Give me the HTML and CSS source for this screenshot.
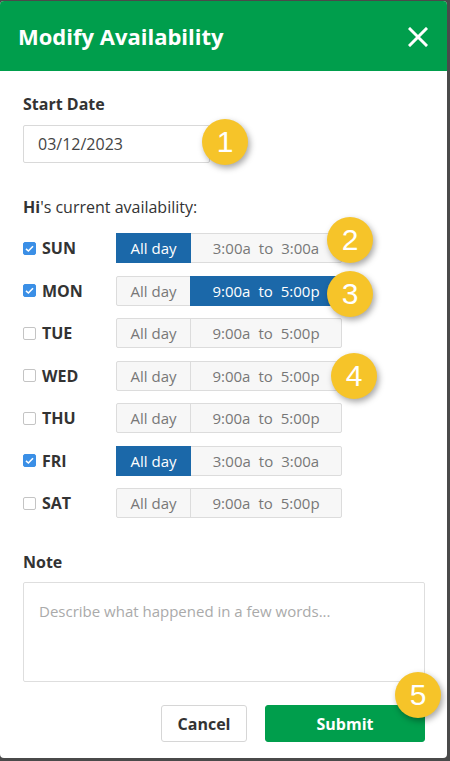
FILE: index.html
```html
<!DOCTYPE html>
<html>
<head>
<meta charset="utf-8">
<link rel="stylesheet" href="styles.css">
</head>
<body>
<div class="modal">
  <div class="modal-header">
    <h1 class="title">Modify Availability</h1>
    <svg class="close" width="20" height="20" viewBox="0 0 20 20"><path d="M2 2 L18 18 M18 2 L2 18" stroke="#fff" stroke-width="3" stroke-linecap="square"/></svg>
  </div>
  <div class="modal-body">
    <div class="label">Start Date</div>
    <div class="date-input">03/12/2023</div>
    <div class="current"><b>Hi</b>'s current availability:</div>
    <div class="days">
      <div class="day-row">
        <div class="day"><span class="cb on"><svg viewBox="0 0 13 13" width="13" height="13"><path d="M3 6.8 L5.4 9 L10 4.3" fill="none" stroke="#fff" stroke-width="1.6"/></svg></span><span class="day-name">SUN</span></div>
        <div class="seg"><span class="allday sel">All day</span><span class="time">3:00a<i>to</i>3:00a</span></div>
      </div>
      <div class="day-row">
        <div class="day"><span class="cb on"><svg viewBox="0 0 13 13" width="13" height="13"><path d="M3 6.8 L5.4 9 L10 4.3" fill="none" stroke="#fff" stroke-width="1.6"/></svg></span><span class="day-name">MON</span></div>
        <div class="seg"><span class="allday">All day</span><span class="time sel">9:00a<i>to</i>5:00p</span></div>
      </div>
      <div class="day-row">
        <div class="day"><span class="cb"></span><span class="day-name">TUE</span></div>
        <div class="seg"><span class="allday">All day</span><span class="time">9:00a<i>to</i>5:00p</span></div>
      </div>
      <div class="day-row">
        <div class="day"><span class="cb"></span><span class="day-name">WED</span></div>
        <div class="seg"><span class="allday">All day</span><span class="time">9:00a<i>to</i>5:00p</span></div>
      </div>
      <div class="day-row">
        <div class="day"><span class="cb"></span><span class="day-name">THU</span></div>
        <div class="seg"><span class="allday">All day</span><span class="time">9:00a<i>to</i>5:00p</span></div>
      </div>
      <div class="day-row">
        <div class="day"><span class="cb on"><svg viewBox="0 0 13 13" width="13" height="13"><path d="M3 6.8 L5.4 9 L10 4.3" fill="none" stroke="#fff" stroke-width="1.6"/></svg></span><span class="day-name">FRI</span></div>
        <div class="seg"><span class="allday sel">All day</span><span class="time">3:00a<i>to</i>3:00a</span></div>
      </div>
      <div class="day-row">
        <div class="day"><span class="cb"></span><span class="day-name">SAT</span></div>
        <div class="seg"><span class="allday">All day</span><span class="time">9:00a<i>to</i>5:00p</span></div>
      </div>
    </div>
    <div class="label note-label">Note</div>
    <div class="note">Describe what happened in a few words...</div>
    <div class="actions">
      <button class="btn cancel">Cancel</button>
      <button class="btn submit">Submit</button>
    </div>
  </div>
  <span class="badge b1">1</span>
  <span class="badge b2">2</span>
  <span class="badge b3">3</span>
  <span class="badge b4">4</span>
  <span class="badge b5">5</span>
</div>
</body>
</html>
```
FILE: styles.css
```css
html, body {
  margin: 0;
  padding: 0;
  background: #4a4a4a;
  height: 761px;
  overflow: hidden;
}
.modal {
  position: relative;
  box-sizing: border-box;
  width: 447px;
  height: 757px;
  margin: 1px 0 0 0;
  background: #fff;
  border-radius: 4px;
  overflow: hidden;
  font-family: "Open Sans", "Liberation Sans", sans-serif;
  color: #333;
}
.modal-header {
  height: 70px;
  background: #009e4c;
  display: flex;
  align-items: center;
  justify-content: space-between;
  padding: 0 18px 0 18px;
}
.title {
  margin: 0;
  color: #fff;
  font-size: 22px;
  font-weight: 700;
  letter-spacing: 0;
}
.close {
  margin-right: 1px;
  margin-top: 2px;
}
.modal-body {
  padding: 23px 22px 0 23px;
}
.label {
  font-size: 16px;
  font-weight: 700;
  line-height: 20px;
  color: #333;
}
.date-input {
  margin-top: 11px;
  box-sizing: border-box;
  width: 187px;
  height: 38px;
  border: 1px solid #d9d9d9;
  border-radius: 2px;
  padding-left: 14px;
  font-size: 16px;
  line-height: 36px;
  color: #444;
}
.current {
  margin-top: 34px;
  font-size: 16px;
  line-height: 20px;
  color: #333;
}
.current b { font-weight: 700; }
.days {
  margin-top: 16px;
  display: flex;
  flex-direction: column;
  gap: 12.5px;
}
.day-row {
  display: flex;
  align-items: center;
  height: 30px;
}
.day {
  width: 93px;
  display: flex;
  align-items: center;
}
.cb {
  box-sizing: border-box;
  width: 13px;
  height: 13px;
  border: 1px solid #c4c4c4;
  border-radius: 2px;
  background: #fff;
  display: inline-flex;
}
.cb.on {
  background: #3b8fe6;
  border-color: #3b8fe6;
}
.cb.on svg { margin: -1px; }
.day-name {
  margin-left: 6px;
  font-size: 16px;
  font-weight: 700;
  color: #333;
}
.seg {
  display: flex;
  height: 30px;
  box-sizing: border-box;
  border: 1px solid #dcdcdc;
  border-radius: 2px;
  background: #f7f7f7;
  font-size: 15px;
  color: #777;
}
.allday {
  width: 73px;
  border-right: 1px solid #dcdcdc;
  display: flex;
  align-items: center;
  justify-content: center;
}
.time {
  width: 150px;
  display: flex;
  align-items: center;
  justify-content: center;
  margin-left: -1px;
  padding-left: 1px;
}
.time i {
  font-style: normal;
  margin: 0 8px;
}
.sel {
  background: #1b68a9;
  color: #fff;
}
.allday.sel { margin: -1px 0 -1px -1px; padding-left: 1px; border-right-color: #1b68a9; }
.time.sel { margin: -1px -1px -1px -1px; padding-right: 1px; }
.note-label {
  margin-top: 34px;
}
.note {
  margin-top: 10px;
  box-sizing: border-box;
  height: 100px;
  border: 1px solid #dedede;
  border-radius: 2px;
  padding: 15px 15px;
  font-size: 15px;
  line-height: 26px;
  color: #aaa;
}
.actions {
  margin-top: 23px;
  display: flex;
  justify-content: flex-end;
  gap: 18px;
}
.btn {
  height: 37px;
  border-radius: 3px;
  font-family: "Open Sans", "Liberation Sans", sans-serif;
  font-size: 16px;
  font-weight: 700;
  padding: 0;
}
.cancel {
  width: 86px;
  background: #fff;
  border: 1px solid #d6d6d6;
  color: #333;
}
.submit {
  width: 160px;
  background: #009e4c;
  border: 1px solid #009e4c;
  color: #fff;
}
.badge {
  position: absolute;
  width: 46px;
  height: 46px;
  margin: -23px 0 0 -23px;
  border-radius: 50%;
  background: #f6c429;
  color: #fff;
  font-family: "Liberation Sans", Arial, sans-serif;
  font-size: 30px;
  line-height: 46px;
  text-align: center;
  box-shadow: 2px 3px 6px rgba(0,0,0,0.35);
}
.b1 { left: 225px; top: 141px; }
.b2 { left: 350px; top: 239px; }
.b3 { left: 350px; top: 293px; }
.b4 { left: 354px; top: 375px; }
.b5 { left: 418px; top: 694px; }
```
